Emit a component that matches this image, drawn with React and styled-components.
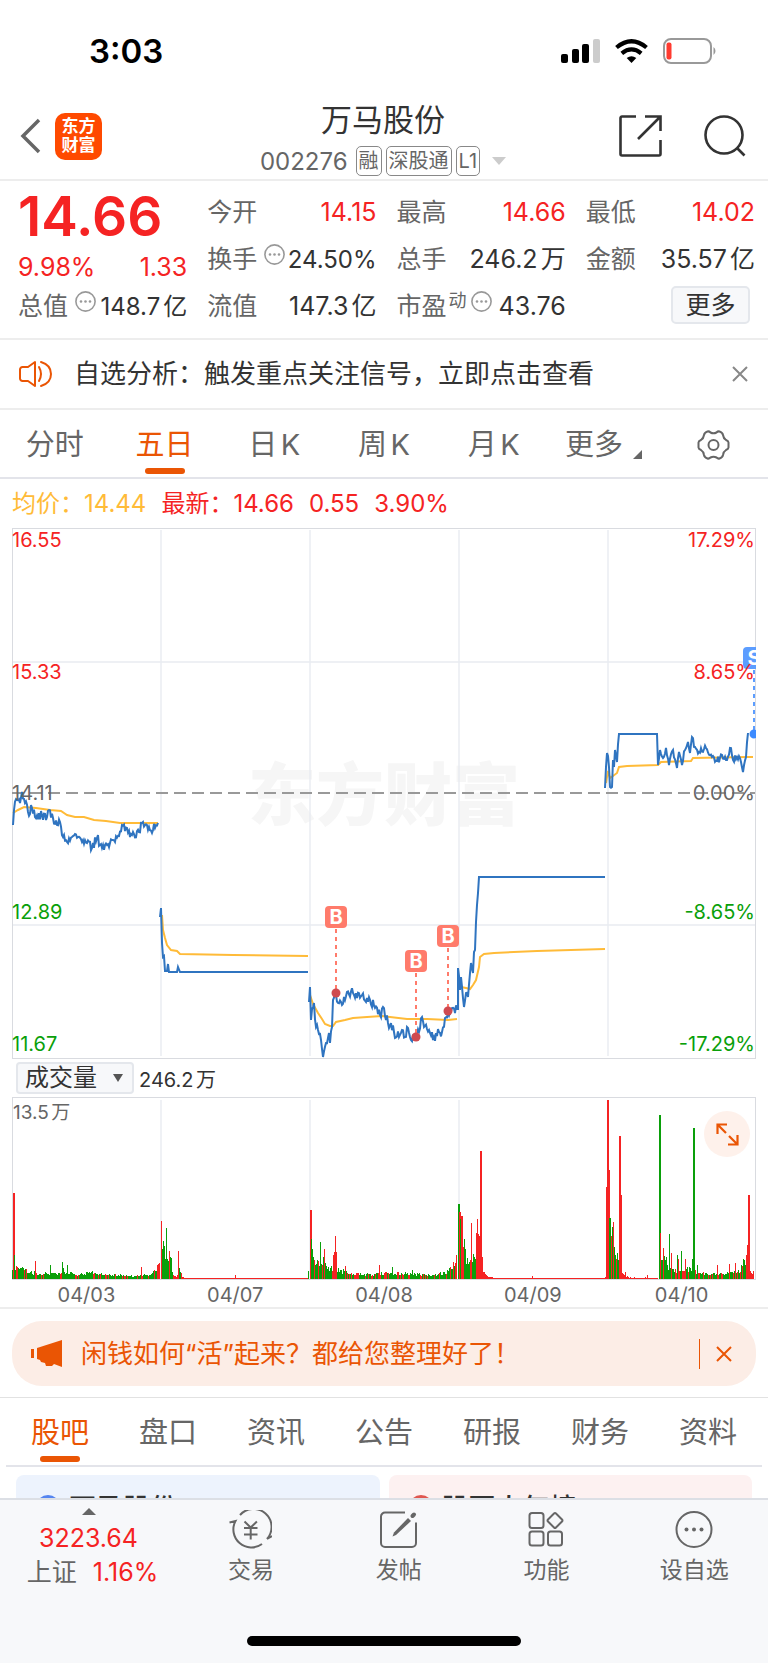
import React, { useState } from 'react'
import styled, { createGlobalStyle } from 'styled-components'

const GlobalStyle = createGlobalStyle`
  * {
    box-sizing: border-box;
  }
  body {
    margin: 0;
    background: #fff;
    color: #333;
    font-family: Inter, "Noto Sans CJK SC", sans-serif;
    text-autospace: normal;
  }
  button, select {
    font-family: inherit;
    color: inherit;
    margin: 0;
    padding: 0;
    border: none;
    background: none;
    cursor: pointer;
  }
  svg {
    display: block;
    flex-shrink: 0;
  }
  h1, p {
    margin: 0;
  }
`

const RED = '#f52323'
const GREEN = '#0a9f0a'
const ORANGE = '#ea5504'
const BLUE = '#2f74c0'
const YELLOW = '#ffbb38'

const Page = styled.div`
  display: flex;
  flex-direction: column;
  height: 100vh;
`

const Content = styled.main`
  flex: 1;
  min-height: 0;
  overflow-y: auto;
  scrollbar-width: none;
`

const StatusBar = styled.div`
  display: flex;
  align-items: center;
  justify-content: space-between;
  height: 102px;
  padding: 0 51px 0 89px;
`

const Clock = styled.span`
  font-size: 33px;
  font-weight: 600;
  color: #000;
`

const StatusIcons = styled.div`
  display: flex;
  align-items: center;
  gap: 15px;
`

const Header = styled.header`
  display: grid;
  grid-template-columns: 1fr auto 1fr;
  align-items: center;
  height: 79px;
  padding: 0 22px 9px 20px;
  border-bottom: 2px solid #ededed;
`

const HeaderSide = styled.div`
  display: flex;
  align-items: center;
  justify-content: ${(props) => (props.$end ? 'flex-end' : 'flex-start')};
  gap: ${(props) => (props.$end ? '42px' : '13px')};
  padding-bottom: 8px;
`

const Logo = styled.div`
  display: flex;
  align-items: center;
  justify-content: center;
  width: 47px;
  height: 47px;
  border-radius: 10px;
  background: #ff4a00;
  color: #fff;
  font-size: 17px;
  font-weight: 700;
  line-height: 19px;
  text-align: center;
`

const HeaderTitle = styled.div`
  display: flex;
  flex-direction: column;
  align-items: center;
`

const StockName = styled.h1`
  padding-bottom: 6px;
  font-size: 31px;
  font-weight: 400;
  line-height: 36px;
`

const StockCode = styled.div`
  display: flex;
  align-items: center;
  gap: 4px;
  height: 34px;
  font-size: 24px;
  color: #666;
`

const Tag = styled.span`
  height: 30px;
  padding: 0 2px;
  border: 1px solid #888;
  border-radius: 5px;
  font-size: 20px;
  line-height: 28px;
  &:first-of-type {
    margin-left: 4px;
  }
`

const CodeArrow = styled.svg`
  margin-left: 8px;
`

const Quote = styled.section`
  display: grid;
  grid-template-columns: repeat(4, 1fr);
  gap: 20px;
  padding: 8px 13px 8px 18px;
  border-bottom: 2px solid #ededed;
`

const QuoteColumn = styled.div`
  min-width: 0;
`

const Price = styled.p`
  height: 54px;
  font-size: 55px;
  font-weight: 600;
  line-height: 54px;
  color: ${RED};
`

const Change = styled.div`
  display: flex;
  justify-content: space-between;
  height: 40px;
  padding-top: 6px;
  font-size: 25px;
  line-height: 36px;
  color: ${RED};
`

const Cell = styled.div`
  display: flex;
  align-items: center;
  height: 47px;
  font-size: 25px;
  line-height: 47px;
  white-space: nowrap;
`

const CellLabel = styled.span`
  color: #666;
`

const CellValue = styled.span`
  margin-left: auto;
  font-size: ${(props) => (props.$small ? '24px' : '25px')};
  color: ${(props) => (props.$red ? RED : '#333')};
`

const Raised = styled.span`
  display: flex;
  align-items: center;
  gap: 4px;
  margin-left: ${(props) => (props.$tight ? '2px' : '7px')};
  padding-bottom: 11px;
  color: #666;
  font-size: 18px;
  line-height: 20px;
`

const MoreButton = styled.button`
  width: 79px;
  height: 38px;
  margin: 0 5px 3px auto;
  border: 2px solid #e4e7ec;
  border-radius: 5px;
  background: #f7f8fa;
  font-size: 25px;
  line-height: 32px;
`

const Notice = styled.section`
  display: flex;
  align-items: center;
  height: 70px;
  padding: 0 20px 0 19px;
  border-bottom: 2px solid #ededed;
`

const NoticeText = styled.p`
  flex: 1;
  margin-left: 21px;
  font-size: 26px;
  line-height: 36px;
`

const Tabs = styled.nav`
  display: grid;
  grid-template-columns: repeat(7, 1fr);
  height: 69px;
  margin: ${(props) => (props.$inset ? '0 6px' : '0')};
  border-bottom: 2px solid #e3e4ea;
`

const Tab = styled.button`
  position: relative;
  display: flex;
  align-items: center;
  justify-content: center;
  gap: 3px;
  padding-top: 2px;
  font-size: 29px;
  line-height: 40px;
  color: ${(props) => (props.$active ? ORANGE : '#666')};
  &::after {
    content: '';
    display: ${(props) => (props.$active ? 'block' : 'none')};
    position: absolute;
    bottom: 3px;
    left: calc(50% - 20px);
    width: 40px;
    height: 6px;
    border-radius: 3px;
    background: ${ORANGE};
  }
`

const TabArrow = styled.svg`
  margin: 20px 0 0 7px;
`

const Legend = styled.div`
  display: flex;
  gap: 15px;
  height: 49px;
  padding: 0 12px;
  font-size: 24px;
  line-height: 50px;
  color: ${RED};
`

const LegendAverage = styled.span`
  color: ${YELLOW};
`

const ChartArea = styled.div`
  position: relative;
  margin: 0 12px;
`

const ChartSvg = styled.svg`
  width: 100%;
  height: auto;
  overflow: hidden;
  font-family: Inter, "Noto Sans CJK SC", sans-serif;
`

const VolumeHeader = styled.div`
  display: flex;
  align-items: center;
  gap: 5px;
  height: 38px;
  padding: 0 16px;
  font-size: 20px;
`

const SelectBox = styled.div`
  position: relative;
  display: flex;
  align-items: center;
`

const Indicator = styled.select`
  appearance: none;
  width: 118px;
  height: 32px;
  padding-left: 7px;
  border: 2px solid #e4e7ec;
  border-radius: 4px;
  background: #f7f8fa;
  font-size: 24px;
  line-height: 28px;
`

const SelectArrow = styled.svg`
  position: absolute;
  right: 11px;
  pointer-events: none;
`

const ExpandButton = styled.button`
  position: absolute;
  top: 14px;
  right: 6px;
  display: flex;
  align-items: center;
  justify-content: center;
  width: 46px;
  height: 46px;
  border-radius: 50%;
  background: #fef1eb;
`

const Dates = styled.div`
  display: grid;
  grid-template-columns: repeat(5, 1fr);
  height: 29px;
  padding: 0 12px;
  border-bottom: 2px solid #ededed;
  font-size: 20px;
  line-height: 30px;
  text-align: center;
  color: #666;
`

const BannerWrap = styled.div`
  padding: 12px 12px 11px;
  border-bottom: 1px solid #e2e2e2;
`

const Banner = styled.div`
  display: flex;
  align-items: center;
  height: 65px;
  padding: 0 24px 0 19px;
  border-radius: 30px;
  background: #fcede6;
  color: ${ORANGE};
`

const BannerText = styled.p`
  flex: 1;
  margin-left: 19px;
  font-size: 26px;
  line-height: 36px;
`

const BannerDivider = styled.span`
  width: 1px;
  height: 30px;
  margin-right: 16px;
  background: ${ORANGE};
`

const Cards = styled.div`
  display: grid;
  grid-template-columns: 1fr 1fr;
  gap: 9px;
  padding: 8px 16px;
`

const Card = styled.a`
  display: flex;
  align-items: center;
  gap: 9px;
  height: 63px;
  padding-left: 20px;
  border-radius: 8px;
  background: ${(props) => props.$bg};
  color: #333;
  font-size: 27px;
  font-weight: 500;
  text-decoration: none;
`

const CardDot = styled.span`
  width: 24px;
  height: 24px;
  border-radius: 50%;
  background: ${(props) => props.$color};
`

const BottomBar = styled.footer`
  border-top: 2px solid #dcdfe5;
  background: #f7f8fa;
`

const BottomNav = styled.nav`
  display: grid;
  grid-template-columns: 177px repeat(4, 1fr);
  height: 90px;
`

const IndexButton = styled.button`
  display: flex;
  flex-direction: column;
  align-items: center;
  padding-top: 8px;
  font-size: 25px;
  color: ${RED};
`

const IndexValue = styled.span`
  margin-top: 6px;
  line-height: 34px;
`

const IndexRow = styled.span`
  display: flex;
  gap: 16px;
  padding-left: 8px;
  line-height: 34px;
`

const IndexName = styled.span`
  color: #666;
`

const NavItem = styled.button`
  display: flex;
  flex-direction: column;
  align-items: center;
  gap: 5px;
  padding-top: 10px;
  font-size: 23px;
  line-height: 32px;
  color: #666;
`

const HomeArea = styled.div`
  display: flex;
  justify-content: center;
  align-items: flex-end;
  height: 73px;
  padding-bottom: 17px;
`

const HomeIndicator = styled.div`
  width: 274px;
  height: 10px;
  border-radius: 5px;
  background: #000;
`

// small repeatable noise so that the lines keep the same shape on every render
function createNoise(seed) {
  let s = seed
  return () => {
    s = (s * 16807) % 2147483647
    return s / 2147483647
  }
}

function roughLine(points, amp, seed) {
  const noise = createNoise(seed)
  const out = []
  for (let i = 0; i < points.length - 1; i++) {
    const [x1, y1] = points[i]
    const [x2, y2] = points[i + 1]
    out.push(`${x1},${y1}`)
    // long segments are limit-up or limit-down, they stay flat
    if (x2 - x1 > 30) continue
    for (let x = x1 + 1; x < x2; x++) {
      const y = y1 + ((y2 - y1) * (x - x1)) / (x2 - x1)
      out.push(`${x},${(y + (noise() - 0.5) * amp).toFixed(1)}`)
    }
  }
  out.push(points[points.length - 1].join(','))
  return out.join(' ')
}

const prices = [
  { amp: 10, points: [[1, 297], [2, 282], [5, 272], [8, 275], [10, 264], [13, 275], [16, 284], [20, 280], [23, 289], [30, 287], [35, 289], [37, 282], [41, 290], [45, 297], [48, 294], [51, 309], [55, 314], [60, 309], [66, 309], [71, 312], [75, 315], [80, 320], [85, 310], [90, 320], [95, 317], [100, 312], [103, 314], [110, 297], [115, 300], [120, 307], [127, 304], [131, 294], [135, 297], [141, 302], [146, 295]] },
  { amp: 0, points: [[148, 389], [149, 380], [150, 415], [151, 429], [152, 428], [153, 443], [155, 443], [156, 436], [157, 444], [165, 444], [166, 439], [168, 444], [296, 444]] },
  { amp: 10, points: [[297, 474], [298, 459], [299, 492], [302, 475], [304, 499], [306, 502], [309, 512], [311, 529], [314, 515], [317, 505], [318, 515], [320, 499], [321, 472], [324, 467], [326, 475], [330, 477], [335, 464], [341, 465], [345, 470], [350, 467], [355, 470], [360, 479], [361, 472], [368, 487], [371, 479], [376, 495], [382, 504], [387, 509], [390, 502], [393, 509], [395, 499], [399, 512], [404, 509], [407, 504], [410, 489], [412, 499], [417, 502], [422, 509], [427, 504], [430, 504], [433, 490], [436, 485], [440, 480], [445, 482]] },
  { amp: 6, points: [[446, 482], [446, 440], [448, 462], [449, 449], [452, 479], [454, 465], [456, 469], [458, 445], [459, 435], [461, 445], [462, 424], [463, 422], [464, 394], [466, 365], [467, 349], [593, 349]] },
  { amp: 8, points: [[593, 260], [594, 239], [595, 225], [597, 239], [598, 259], [600, 259], [601, 232], [602, 239], [603, 222], [605, 234], [607, 206], [645, 206], [646, 237], [648, 222], [651, 230], [654, 220], [657, 237], [661, 222], [665, 240], [667, 224], [670, 237], [673, 222], [676, 214], [678, 225], [680, 209], [683, 219], [687, 224], [694, 220], [700, 229], [705, 233], [710, 227], [715, 232], [718, 220], [721, 232], [725, 229], [729, 234], [731, 244], [734, 229], [736, 205]] },
]

const averages = [
  '1,285 6,282 12,279 24,280 38,282 49,283 55,287 63,289 72,289 82,292 94,293 108,295 130,295 146,295',
  '150,387 151,402 153,410 155,417 159,422 165,423 168,426 221,427 296,428',
  '298,467 301,476 306,485 310,491 313,496 318,498 321,498 324,494 333,492 341,490 355,489 370,488 378,489 395,491 415,491 436,492 445,491',
  '449,459 454,460 458,461 461,457 464,452 467,439 468,429 472,426 482,425 525,423 593,421',
  '594,255 596,243 598,250 601,248 605,245 607,239 615,238 646,237 649,234 679,233 681,230 735,229 741,229',
]

const priceLabels = [
  { y: 19, left: '16.55', right: '17.29%', color: RED },
  { y: 151, left: '15.33', right: '8.65%', color: RED },
  { y: 272, left: '14.11', right: '0.00%', color: '#666' },
  { y: 391, left: '12.89', right: '-8.65%', color: GREEN },
  { y: 523, left: '11.67', right: '-17.29%', color: GREEN },
]

const trades = [
  { type: 'B', x: 324, top: 389, dot: 465 },
  { type: 'B', x: 404, top: 433, dot: 509 },
  { type: 'B', x: 436, top: 408, dot: 483 },
  { type: 'S', x: 742, top: 130, dot: 206 },
]

// usual volume as [x, height], and the share of falling minutes
const volumeBase = [
  { green: 0.75, points: [[1, 16], [6, 13], [12, 12], [20, 8], [38, 6], [55, 8], [65, 5], [80, 8], [100, 5], [125, 4], [140, 6], [147, 15]] },
  { green: 0, points: [[162, 4], [165, 4], [170, 3], [175, 1], [296, 1]] },
  { green: 0.72, points: [[300, 25], [308, 21], [316, 14], [330, 10], [345, 6], [360, 5], [370, 7], [385, 7], [400, 7], [420, 4], [435, 8], [445, 17]] },
  { green: 0.6, points: [[447, 60], [452, 36], [458, 19], [463, 28], [466, 46]] },
  { green: 0, points: [[472, 10], [475, 4], [485, 1], [592, 1], [594, 2]] },
  { green: 0.5, points: [[598, 55], [601, 50], [604, 26], [607, 24]] },
  { green: 0, points: [[610, 12], [613, 4], [620, 2], [646, 1]] },
  { green: 0.7, points: [[649, 29], [656, 16], [664, 10], [675, 13], [690, 7], [712, 6], [728, 9], [733, 21], [735, 25]] },
  { green: 0, points: [[738, 9], [742, 9]] },
]

const volumeSpikes = [
  [2, 86, 'r'], [3, 24, 'g'], [24, 18, 'r'], [39, 14, 'g'], [51, 17, 'g'], [52, 11, 'g'], [56, 14, 'g'], [130, 12, 'r'], [148, 16, 'r'],
  [150, 58, 'r'], [151, 30, 'g'], [152, 38, 'g'], [153, 33, 'g'], [154, 20, 'g'], [155, 51, 'g'], [156, 20, 'g'], [157, 18, 'g'], [158, 28, 'r'], [159, 22, 'g'], [160, 21, 'g'], [161, 7, 'g'],
  [167, 28, 'r'], [168, 11, 'g'], [169, 7, 'g'], [170, 6, 'r'], [224, 4, 'r'],
  [297, 8, 'g'], [299, 69, 'r'], [300, 40, 'g'], [301, 30, 'g'], [309, 37, 'g'], [312, 22, 'g'], [313, 30, 'r'], [322, 24, 'r'], [323, 27, 'r'], [324, 43, 'r'], [325, 27, 'r'], [334, 13, 'r'], [368, 14, 'r'],
  [381, 12, 'g'], [401, 9, 'g'], [442, 17, 'r'], [445, 24, 'r'],
  [447, 75, 'g'], [448, 67, 'r'], [449, 60, 'g'], [450, 63, 'r'], [453, 40, 'g'], [460, 56, 'r'], [465, 46, 'r'], [466, 60, 'r'], [467, 45, 'r'], [468, 43, 'r'], [469, 128, 'r'], [470, 38, 'r'], [471, 22, 'r'], [521, 3, 'r'],
  [595, 92, 'r'], [596, 179, 'r'], [597, 109, 'r'], [598, 61, 'g'], [602, 57, 'r'], [608, 143, 'r'], [609, 84, 'r'], [610, 12, 'r'], [614, 7, 'r'], [636, 4, 'r'],
  [648, 164, 'g'], [649, 46, 'r'], [652, 31, 'r'], [655, 22, 'g'], [658, 45, 'g'], [660, 26, 'r'], [666, 24, 'g'], [667, 20, 'r'], [670, 28, 'g'], [674, 20, 'r'], [681, 20, 'g'], [682, 151, 'g'], [686, 14, 'g'],
  [706, 14, 'r'], [718, 15, 'r'], [724, 16, 'r'], [732, 20, 'g'], [735, 24, 'r'], [736, 34, 'r'], [737, 84, 'r'],
]

function buildVolume() {
  const noise = createNoise(4107)
  const bars = {}
  volumeBase.forEach(({ green, points }) => {
    for (let i = 0; i < points.length - 1; i++) {
      const [x1, h1] = points[i]
      const [x2, h2] = points[i + 1]
      for (let x = x1; x <= x2; x++) {
        const h = h1 + ((h2 - h1) * (x - x1)) / (x2 - x1)
        bars[x] = [x, h * (0.55 + noise() * 0.5), noise() < green ? 'g' : 'r']
      }
    }
  })
  volumeSpikes.forEach((bar) => {
    bars[bar[0]] = bar
  })
  return Object.values(bars)
}

const volumeBars = buildVolume()
const dayLines = [149, 298, 447, 596]

const MoreDots = () => (
  <svg width="21" height="21" viewBox="0 0 21 21">
    <circle cx="10.5" cy="10.5" r="9.6" fill="none" stroke="#999" strokeWidth="1.6" />
    <circle cx="6" cy="10.5" r="1.3" fill="#999" />
    <circle cx="10.5" cy="10.5" r="1.3" fill="#999" />
    <circle cx="15" cy="10.5" r="1.3" fill="#999" />
  </svg>
)

const CloseIcon = ({ color }) => (
  <svg width="16" height="16" viewBox="0 0 16 16" fill="none" stroke={color} strokeWidth="2">
    <path d="M1 1l14 14M15 1L1 15" />
  </svg>
)

const PriceChart = () => (
  <ChartSvg viewBox="0 0 744 531" role="img" aria-label="五日分时">
    <text x="372" y="292" textAnchor="middle" fontSize="68" fontWeight="900" fill="#f6f6f6">东方财富</text>
    <g stroke="#e9ebf1" strokeWidth="1.4">
      {dayLines.map((x) => <line key={x} x1={x} x2={x} y1="2" y2="528" />)}
      <line x1="1" x2="743" y1="134" y2="134" />
      <line x1="1" x2="743" y1="397" y2="397" />
    </g>
    <rect x="0.5" y="0.5" width="743" height="530" fill="none" stroke="#d9dbe0" />
    <line x1="0" x2="743" y1="265" y2="265" stroke="#999" strokeWidth="2" strokeDasharray="12 6" />
    {averages.map((points) => (
      <polyline key={points} points={points} fill="none" stroke={YELLOW} strokeWidth="2" />
    ))}
    {prices.map((day, i) => (
      <polyline key={i} points={roughLine(day.points, day.amp, 31 + i)} fill="none" stroke={BLUE} strokeWidth="2" />
    ))}
    {trades.map(({ type, x, top, dot }) => {
      const color = type === 'B' ? '#ff7b6b' : '#5c9dff'
      return (
        <g key={x}>
          <line x1={x} x2={x} y1={top + 12} y2={dot} stroke={color} strokeWidth="2" strokeDasharray="4 4" />
          <circle cx={x} cy={dot} r="4.5" fill={type === 'B' ? '#cf4a50' : '#3d8bff'} />
          <rect x={x - 11} y={top - 11} width="22" height="22" rx="4" fill={color} />
          <text x={x} y={top + 7} textAnchor="middle" fontSize="20" fontWeight="700" fill="#fff">{type}</text>
        </g>
      )
    })}
    {priceLabels.map(({ y, left, right, color }) => (
      <g key={y} fill={color} fontSize="20">
        <text x="0" y={y}>{left}</text>
        <text x="743" y={y} textAnchor="end">{right}</text>
      </g>
    ))}
  </ChartSvg>
)

const VolumeChart = () => (
  <ChartSvg viewBox="0 0 744 183" role="img" aria-label="成交量">
    {dayLines.map((x) => <line key={x} x1={x} x2={x} y1="3" y2="182" stroke="#e9ebf1" strokeWidth="1.4" />)}
    <rect x="0.5" y="0.5" width="743" height="182" fill="none" stroke="#d9dbe0" />
    <g shapeRendering="crispEdges">
      {volumeBars.map(([x, h, tone]) => (
        <rect key={x} x={x - 1} y={182 - h} width={h > 60 ? 2 : 1} height={h} fill={tone === 'g' ? '#0a9f0a' : '#f52323'} />
      ))}
    </g>
    <text x="1" y="22" fontSize="19" fill="#666">13.5万</text>
  </ChartSvg>
)

const periods = ['分时', '五日', '日K', '周K', '月K']
const sections = ['股吧', '盘口', '资讯', '公告', '研报', '财务', '资料']
const days = ['04/03', '04/07', '04/08', '04/09', '04/10']

const App = () => {
  const [period, setPeriod] = useState('五日')
  const [section, setSection] = useState('股吧')

  return (
    <Page>
      <GlobalStyle />
      <Content>
        <StatusBar>
          <Clock>3:03</Clock>
          <StatusIcons>
            <svg width="39" height="24" viewBox="0 0 39 24">
              <rect x="0" y="15" width="7" height="9" rx="2" />
              <rect x="11" y="10" width="7" height="14" rx="2" />
              <rect x="21" y="5" width="7" height="19" rx="2" />
              <rect x="32" y="0" width="7" height="24" rx="2" fill="#ccc" />
            </svg>
            <svg width="33" height="24" viewBox="0 0 33 24">
              <path d="M16.5 24l-4.8-4.9q4.8-3.8 9.600 0z" />
              <path d="M1.500 8.500q15-12.500 30 0M6.800 14.300q9.700-7.800 19.400 0" fill="none" stroke="#000" strokeWidth="4.200" />
            </svg>
            <svg width="54" height="26" viewBox="0 0 54 26">
              <rect x="1" y="1" width="47" height="24" rx="7" fill="none" stroke="#999" strokeWidth="2" />
              <rect x="3.500" y="4.500" width="5" height="17" rx="2" fill="#ff3b30" />
              <path d="M50.500 9v8a5 5 0 0 0 0-8z" fill="#999" />
            </svg>
          </StatusIcons>
        </StatusBar>

        <Header>
          <HeaderSide>
            <button aria-label="返回">
              <svg width="22" height="36" viewBox="0 0 22 36" fill="none" stroke="#666" strokeWidth="3.500">
                <path d="M19 2L3 18l16 16" />
              </svg>
            </button>
            <Logo>东方<br />财富</Logo>
          </HeaderSide>
          <HeaderTitle>
            <StockName>万马股份</StockName>
            <StockCode>
              002276
              <Tag>融</Tag>
              <Tag>深股通</Tag>
              <Tag>L1</Tag>
              <CodeArrow width="14" height="8" viewBox="0 0 14 8" fill="#ccc">
                <path d="M0 0h14L7 8z" />
              </CodeArrow>
            </StockCode>
          </HeaderTitle>
          <HeaderSide $end>
            <button aria-label="分享">
              <svg width="43" height="42" viewBox="0 0 43 42" fill="none" stroke="#333" strokeWidth="2.600">
                <path d="M17 1.500H3a1.500 1.500 0 0 0-1.500 1.500v36A1.500 1.500 0 0 0 3 40.500h37a1.500 1.500 0 0 0 1.500-1.500V25" />
                <path d="M26 1.500h15.500V16M41 2L19 24" />
              </svg>
            </button>
            <button aria-label="搜索">
              <svg width="42" height="42" viewBox="0 0 42 42" fill="none" stroke="#333" strokeWidth="2.600">
                <circle cx="20" cy="20" r="18.500" />
                <path d="M33 33l7.500 7.500" />
              </svg>
            </button>
          </HeaderSide>
        </Header>

        <Quote>
          <QuoteColumn>
            <Price>14.66</Price>
            <Change>
              <span>9.98%</span>
              <span>1.33</span>
            </Change>
            <Cell>
              <CellLabel>总值</CellLabel>
              <Raised><MoreDots /></Raised>
              <CellValue $small>148.7亿</CellValue>
            </Cell>
          </QuoteColumn>
          <QuoteColumn>
            <Cell><CellLabel>今开</CellLabel><CellValue $red>14.15</CellValue></Cell>
            <Cell>
              <CellLabel>换手</CellLabel>
              <Raised><MoreDots /></Raised>
              <CellValue $small>24.50%</CellValue>
            </Cell>
            <Cell><CellLabel>流值</CellLabel><CellValue>147.3亿</CellValue></Cell>
          </QuoteColumn>
          <QuoteColumn>
            <Cell><CellLabel>最高</CellLabel><CellValue $red>14.66</CellValue></Cell>
            <Cell><CellLabel>总手</CellLabel><CellValue>246.2万</CellValue></Cell>
            <Cell>
              <CellLabel>市盈</CellLabel>
              <Raised $tight>动<MoreDots /></Raised>
              <CellValue>43.76</CellValue>
            </Cell>
          </QuoteColumn>
          <QuoteColumn>
            <Cell><CellLabel>最低</CellLabel><CellValue $red>14.02</CellValue></Cell>
            <Cell><CellLabel>金额</CellLabel><CellValue>35.57亿</CellValue></Cell>
            <Cell><MoreButton>更多</MoreButton></Cell>
          </QuoteColumn>
        </Quote>

        <Notice>
          <svg width="34" height="28" viewBox="0 0 34 28" fill="none" stroke={ORANGE} strokeWidth="2">
            <path d="M16 2v24l-7-5H3.500A2.500 2.500 0 0 1 1 18.500v-9A2.500 2.500 0 0 1 3.500 7H9z" strokeLinejoin="round" />
            <path d="M20 7q4 7 0 14M22 2q10 3 10 12t-10 12" strokeLinecap="round" />
          </svg>
          <NoticeText>自选分析：触发重点关注信号，立即点击查看</NoticeText>
          <button aria-label="关闭"><CloseIcon color="#888" /></button>
        </Notice>

        <Tabs>
          {periods.map((name) => (
            <Tab key={name} $active={name === period} onClick={() => setPeriod(name)}>{name}</Tab>
          ))}
          <Tab>
            更多
            <TabArrow width="9" height="9" viewBox="0 0 9 9" fill="#666"><path d="M9 0v9H0z" /></TabArrow>
          </Tab>
          <Tab aria-label="设置">
            <svg width="33" height="30" viewBox="0 0 33 30" fill="none" stroke="#666" strokeWidth="2">
              <path d="M10.500 1.500q1.500-.5 3 1 3 1.500 6 0 1.500-1.500 3-1 3 1 3.500 3.500.5 3.500 3 5 2.500 1 2.500 2.500v5q0 1.500-2.500 2.500-2.500 1.500-3 5-.5 2.500-3.500 3.500-1.500.5-3-1-3-1.500-6 0-1.500 1.500-3 1-3-1-3.500-3.500-.5-3.500-3-5-2.500-1-2.500-2.500v-5q0-1.500 2.500-2.500 2.500-1.500 3-5 .5-2.500 3.500-3.500z" />
              <circle cx="16.500" cy="15" r="5" />
            </svg>
          </Tab>
        </Tabs>

        <Legend>
          <LegendAverage>均价：14.44</LegendAverage>
          <span>最新：14.66</span>
          <span>0.55</span>
          <span>3.90%</span>
        </Legend>

        <ChartArea>
          <PriceChart />
        </ChartArea>
        <VolumeHeader>
          <SelectBox>
            <Indicator aria-label="指标">
              <option>成交量</option>
            </Indicator>
            <SelectArrow width="10" height="8" viewBox="0 0 10 8" fill="#555"><path d="M0 0h10L5 8z" /></SelectArrow>
          </SelectBox>
          <span>246.2万</span>
        </VolumeHeader>
        <ChartArea>
          <VolumeChart />
          <ExpandButton aria-label="全屏">
            <svg width="23" height="23" viewBox="0 0 23 23" fill="none" stroke={ORANGE} strokeWidth="2.200">
              <path d="M1.500 11V1.500H11M2 2l8 8M21.500 12v9.500H12M21 21l-8-8" />
            </svg>
          </ExpandButton>
        </ChartArea>
        <Dates>
          {days.map((day) => <span key={day}>{day}</span>)}
        </Dates>

        <BannerWrap>
          <Banner>
            <svg width="31" height="27" viewBox="0 0 31 27" fill={ORANGE}>
              <path d="M0 9h3v9H0zM6 8L31 0v27l-8-3-2 2h-6l-1-3-4-1-1-2-3-1z" />
            </svg>
            <BannerText>闲钱如何“活”起来？都给您整理好了！</BannerText>
            <BannerDivider />
            <button aria-label="关闭"><CloseIcon color={ORANGE} /></button>
          </Banner>
        </BannerWrap>

        <Tabs $inset>
          {sections.map((name) => (
            <Tab key={name} $active={name === section} onClick={() => setSection(name)}>{name}</Tab>
          ))}
        </Tabs>
        <Cards>
          <Card href="#stock" $bg="#edf3fd"><CardDot $color="#5585f0" />万马股份</Card>
          <Card href="#rank" $bg="#fdf1f1"><CardDot $color="#e05750" />股票人气榜</Card>
        </Cards>
      </Content>

      <BottomBar>
        <BottomNav>
          <IndexButton>
            <svg width="14" height="7" viewBox="0 0 14 7" fill="#666"><path d="M7 0l7 7H0z" /></svg>
            <IndexValue>3223.64</IndexValue>
            <IndexRow><IndexName>上证</IndexName>1.16%</IndexRow>
          </IndexButton>
          <NavItem>
            <svg width="43" height="39" viewBox="0 0 43 39" fill="none" stroke="#666" strokeWidth="2">
              <path d="M11 5A18 18 0 0 1 38 29l5-3" />
              <path d="M33 34A18 18 0 0 1 6.500 11l-6 1.500" />
              <path d="M15.500 11.500l6.200 6 6.200-6M21.700 17.500v12M15 18h13.500M15 24.500h13.500" />
            </svg>
            交易
          </NavItem>
          <NavItem>
            <svg width="37" height="39" viewBox="0 0 37 39" fill="none" stroke="#666" strokeWidth="2">
              <path d="M25 2.500H5a4 4 0 0 0-4 4V33a4 4 0 0 0 4 4h27a4 4 0 0 0 4-4V12.500" />
              <path d="M32.500 6l1.500-1.500" strokeWidth="4" strokeLinecap="round" />
              <path d="M28 8l3 3-15 14-3.500 1.500L14 22.500z" fill="#666" stroke="none" />
            </svg>
            发帖
          </NavItem>
          <NavItem>
            <svg width="36" height="39" viewBox="0 0 36 39" fill="none" stroke="#666" strokeWidth="2">
              <rect x="1.500" y="3" width="14" height="15" rx="2.500" />
              <rect x="1.500" y="21.500" width="14" height="14" rx="2.500" />
              <rect x="20" y="21.500" width="14" height="14" rx="2.500" />
              <path d="M26 3.500q1-1 2 0l6 6q1 1 0 2l-6 6q-1 1-2 0l-6-6q-1-1 0-2z" />
            </svg>
            功能
          </NavItem>
          <NavItem>
            <svg width="38" height="39" viewBox="0 0 38 39">
              <circle cx="19" cy="19.500" r="17.500" fill="none" stroke="#666" strokeWidth="2" />
              <circle cx="11.500" cy="19.500" r="2" fill="#666" />
              <circle cx="19" cy="19.500" r="2" fill="#666" />
              <circle cx="26.500" cy="19.500" r="2" fill="#666" />
            </svg>
            设自选
          </NavItem>
        </BottomNav>
        <HomeArea>
          <HomeIndicator />
        </HomeArea>
      </BottomBar>
    </Page>
  )
}

export default App
